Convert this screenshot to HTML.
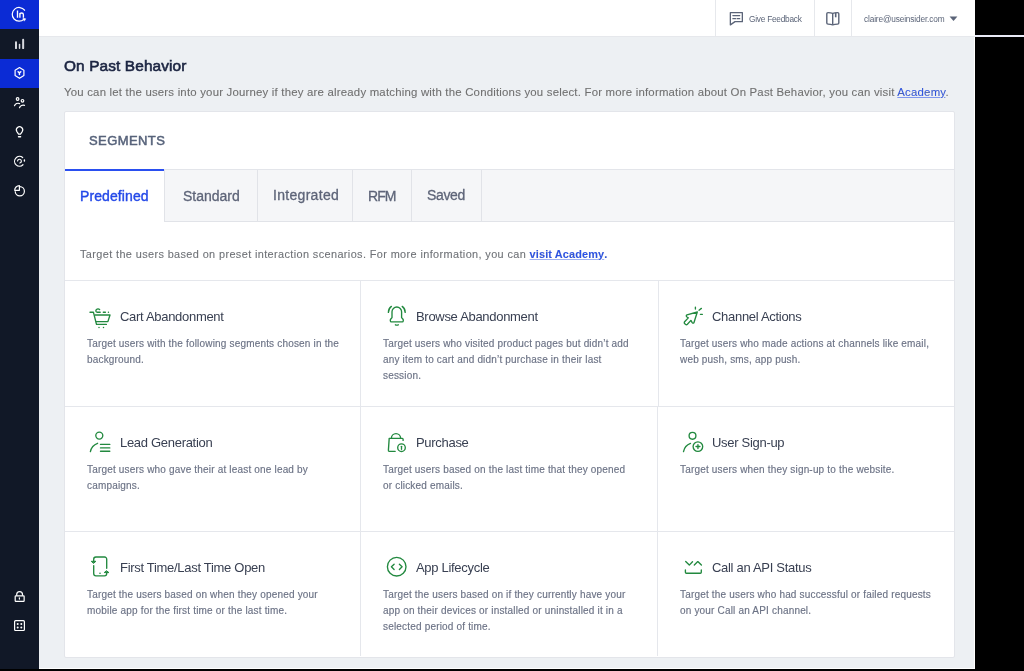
<!DOCTYPE html>
<html><head><meta charset="utf-8">
<style>
*{margin:0;padding:0;box-sizing:border-box}
html,body{width:1024px;height:671px;overflow:hidden;background:#000;font-family:"Liberation Sans",sans-serif}
.abs{position:absolute}
#page{position:absolute;left:0;top:0;width:975px;height:669px;background:#edf0f3;overflow:hidden}
#side{position:absolute;left:0;top:0;width:39px;height:669px;background:#111827}
.si{position:absolute;left:0;width:39px;height:29.4px}
#hdr{position:absolute;left:39px;top:0;width:936px;height:37px;background:#fff;border-bottom:1px solid #e6e8ec}
.vsep{position:absolute;top:0;width:1px;height:36px;background:#e6e8ec}
.t{position:absolute;white-space:nowrap;line-height:1;will-change:transform}
#card{position:absolute;left:64px;top:111px;width:891px;height:547px;background:#fff;border:1px solid #e3e5ea;border-radius:2px}
.cd{position:absolute;will-change:transform;white-space:nowrap;font-size:10px;color:#6b7285;line-height:16.2px;width:262px;letter-spacing:0.18px;-webkit-text-stroke:0.15px #6b7285}
.hl{position:absolute;height:1px;background:#e5e7ec}
.vl{position:absolute;width:1px;background:#e5e7ec}
svg{overflow:visible}
</style></head>
<body>
<div id="page">
  <div id="side">
    <div class="si" style="top:0;background:#0b2bd5"></div>
    <div class="si" style="top:58.6px;background:#0b2bd5"></div>
    
<svg class="abs" style="left:9px;top:4px" width="20" height="20" viewBox="0 0 20 20" fill="none" stroke="#fff" stroke-width="1.25" stroke-linecap="round">
 <path d="M15.57 6.23A6.85 6.85 0 1 0 15.03 15.11"/><path d="M14.3 14.5L16.7 14.8L15.5 16.8Z" fill="#fff" stroke-width="0.6"/>
 <path d="M8.5 6.5V13.7M10.9 13.7V9M10.9 10.8Q10.9 9 12.6 9Q14.4 9 14.4 10.8V13.7" stroke-width="1.35" stroke-linecap="butt"/>
</svg>
<svg class="abs" style="left:13px;top:37px" width="14" height="14" viewBox="0 0 14 14" fill="#d6d8de">
 <rect x="2" y="4.3" width="2" height="7.75" rx="0.9"/><rect x="5.8" y="6.7" width="1.5" height="5.35" rx="0.7"/><rect x="9.15" y="1.8" width="2" height="10.25" rx="0.9"/>
</svg>
<svg class="abs" style="left:13px;top:66px" width="14" height="14" viewBox="0 0 14 14" fill="none" stroke="#fff" stroke-width="1.2" stroke-linejoin="round" stroke-linecap="round">
 <path d="M6.5 1.6L10.9 4.2V9.6L6.5 12.3L2.1 9.6V4.2Z"/><path d="M5.1 5.7L6.45 6.9L7.8 5.7M6.45 6.9V8.5" stroke-width="1.5"/>
</svg>
<svg class="abs" style="left:12px;top:95px" width="16" height="16" viewBox="0 0 16 16" fill="none" stroke="#fff" stroke-width="1.2" stroke-linecap="round">
 <circle cx="5.6" cy="4" r="1.3"/><circle cx="10.5" cy="5.8" r="1.3"/><path d="M2.5 10.7A3.8 3.8 0 0 1 7.6 8.6M7.5 12.7A3.8 3.8 0 0 1 12.5 10.4"/>
</svg>
<svg class="abs" style="left:13px;top:124px" width="14" height="16" viewBox="0 0 14 16" fill="none" stroke="#fff" stroke-width="1.2" stroke-linecap="round" stroke-linejoin="round">
 <path d="M5.6 10.1L3.9 7.6A3.15 3.15 0 1 1 9.2 7.6L7.5 10.1Z"/><path d="M5.5 12.8H7.6" stroke-width="1.4"/>
</svg>
<svg class="abs" style="left:12px;top:154px" width="16" height="16" viewBox="0 0 16 16" fill="none" stroke="#fff" stroke-width="1.2" stroke-linecap="round">
 <path d="M10.65 3.55A4.9 4.9 0 1 0 10.96 10.76"/><path d="M12.4 5.9V7.1" stroke-width="1.4"/><path d="M5.6 6.8A1.9 1.9 0 1 1 7.8 9"/>
</svg>
<svg class="abs" style="left:12px;top:183px" width="16" height="16" viewBox="0 0 16 16" fill="none" stroke="#fff" stroke-width="1.2" stroke-linejoin="round">
 <path d="M7.8 3.6A4.6 4.6 0 1 1 3.2 8.2"/><path d="M7.4 7.3V2.6A4.7 4.7 0 0 0 2.7 7.3Z"/>
</svg>
<svg class="abs" style="left:13px;top:589px" width="14" height="14" viewBox="0 0 14 14" fill="none" stroke="#fff" stroke-width="1.2" stroke-linejoin="round">
 <rect x="2.2" y="6.8" width="8.95" height="5.5" rx="0.6"/><path d="M3.7 6.8V5.6A2.9 2.9 0 0 1 9.5 5.6V6.8"/><path d="M6.4 8.8V10.1" stroke-linecap="round"/>
</svg>
<svg class="abs" style="left:13px;top:619px" width="14" height="14" viewBox="0 0 14 14" fill="none" stroke="#fff" stroke-width="1.2">
 <rect x="1.6" y="1.7" width="9.8" height="9.8" rx="1"/>
 <circle cx="4.7" cy="4.9" r="1.0" fill="#fff" stroke="none"/><circle cx="8.3" cy="4.9" r="1.0" fill="#fff" stroke="none"/>
 <circle cx="4.7" cy="8.6" r="1.0" fill="#fff" stroke="none"/><circle cx="8.3" cy="8.6" r="1.0" fill="#fff" stroke="none"/>
</svg>

  </div>
  <div id="hdr">
    <div class="vsep" style="left:676px"></div>
    <div class="vsep" style="left:775px"></div>
    <div class="vsep" style="left:812px"></div>
  </div>
  <svg class="abs" style="left:728px;top:10px" width="16" height="16" viewBox="0 0 16 16" fill="none" stroke="#5b6478" stroke-width="1.3" stroke-linejoin="round" stroke-linecap="round">
    <path d="M2.35 2.55H14.35V11.65H7L2.35 14.9Z"/><path d="M4.9 5.6H11.7M4.9 8.7H7.6M9.2 8.7H11.7"/>
  </svg>
  <div class="t" style="left:748.75px;top:15.17px;font-size:8.3px;color:#5b6478;letter-spacing:-0.24px">Give Feedback</div>
  <svg class="abs" style="left:825px;top:11px" width="16" height="16" viewBox="0 0 16 16" fill="none" stroke="#5b6478" stroke-width="1.4" stroke-linejoin="round">
    <path d="M1.8 2.8Q1.8 1.6 3 1.6Q5.8 1.6 7.7 2.3Q9.6 1.6 12.6 1.6Q13.8 1.6 13.8 2.8V12.1Q13.8 13.1 12.6 13.1Q9.6 13.1 7.7 13.8Q5.8 13.1 3 13.1Q1.8 13.1 1.8 12.1Z"/><path d="M7.7 2.3V13.8"/><path d="M10.7 1.8V6.3" stroke-width="1.6"/>
  </svg>
  <div class="t" style="left:863.7px;top:15.27px;font-size:8.3px;color:#5b6478;letter-spacing:-0.15px">claire@useinsider.com</div>
  <svg class="abs" style="left:949px;top:16px" width="10" height="6" viewBox="0 0 10 6"><path d="M0.6 0.5H8.4L4.5 5Z" fill="#5b6478"/></svg>
  <div class="t" style="left:64.3px;top:58.16px;font-size:15.4px;color:#1b2441;letter-spacing:0.12px;-webkit-text-stroke:0.6px #1b2441">On Past Behavior</div>
  <div class="t" style="left:64.3px;top:86.65px;font-size:11.4px;color:#707070;letter-spacing:0.205px;-webkit-text-stroke:0.1px #707070">You can let the users into your Journey if they are already matching with the Conditions you select. For more information about On Past Behavior, you can visit <span style="color:#2a52e8;text-decoration:underline;text-decoration-color:#7f96ee">Academy</span>.</div>
  <div id="card"></div>
  <div class="t" style="left:88.6px;top:134.30px;font-size:13px;letter-spacing:0.42px;color:#56627a;-webkit-text-stroke:0.5px #56627a">SEGMENTS</div>
  <div class="hl" style="left:65px;top:169px;width:889px;background:#e3e5ea"></div>
  <div class="abs" style="left:164px;top:170px;width:790px;height:52px;background:#f5f6f8"></div>
  <div class="abs" style="left:65px;top:169px;width:99px;height:2px;background:#2a4ff0"></div>
  <div class="vl" style="left:164px;top:170px;height:52px;background:#e1e3e8"></div>
  <div class="vl" style="left:257px;top:170px;height:52px;background:#e1e3e8"></div>
  <div class="vl" style="left:352px;top:170px;height:52px;background:#e1e3e8"></div>
  <div class="vl" style="left:411px;top:170px;height:52px;background:#e1e3e8"></div>
  <div class="vl" style="left:481px;top:170px;height:52px;background:#e1e3e8"></div>
  <div class="hl" style="left:164px;top:221px;width:790px;background:#e1e3e8"></div>
  <div class="t" style="left:80.3px;top:188.95px;font-size:14px;color:#2449e8;letter-spacing:0.1px;-webkit-text-stroke:0.4px #2449e8">Predefined</div>
  <div class="t" style="left:183.2px;top:188.95px;font-size:14px;color:#5d6478;-webkit-text-stroke:0.3px #5d6478">Standard</div>
  <div class="t" style="left:272.5px;top:187.65px;font-size:14px;color:#5d6478;letter-spacing:0.3px;-webkit-text-stroke:0.3px #5d6478">Integrated</div>
  <div class="t" style="left:368.4px;top:189.15px;font-size:14px;color:#5d6478;letter-spacing:-0.9px;-webkit-text-stroke:0.3px #5d6478">RFM</div>
  <div class="t" style="left:426.8px;top:187.65px;font-size:14px;color:#5d6478;letter-spacing:-0.35px;-webkit-text-stroke:0.3px #5d6478">Saved</div>
  <div class="t" style="left:80px;top:248.97px;font-size:10.9px;color:#6f7277;letter-spacing:0.385px;-webkit-text-stroke:0.1px #6f7277">Target the users based on preset interaction scenarios. For more information, you can <span style="color:#2a52e8;font-weight:bold;letter-spacing:0.14px;text-decoration:underline;text-decoration-color:#9fb2f2">visit Academy</span><span style="color:#2a52e8;font-weight:bold">.</span></div>
  <div class="hl" style="left:65px;top:280px;width:889px"></div>
  <div class="hl" style="left:65px;top:406px;width:889px"></div>
  <div class="hl" style="left:65px;top:531px;width:889px"></div>
  <div class="vl" style="left:360px;top:280px;height:376px"></div>
  <div class="vl" style="left:658px;top:280px;height:126px"></div><div class="vl" style="left:657px;top:406px;height:250px"></div>
  <div class="abs" style="left:974px;top:37px;width:1px;height:632px;background:#fff"></div>
  <div class="abs" style="left:39px;top:668px;width:936px;height:1px;background:#fff"></div>
  <svg class="abs" style="left:84px;top:302px" width="32" height="32" viewBox="0 0 32 32" fill="none" stroke="#22893f" stroke-width="1.35" stroke-linecap="round" stroke-linejoin="round"><path d="M6 10.2H9.4L12.5 22.4H22.4"/><path d="M11 13H26L23.9 19.6H12.3"/><circle cx="15" cy="25.6" r="0.75" fill="#22893f" stroke="none"/><circle cx="19.5" cy="25.6" r="0.75" fill="#22893f" stroke="none"/><path d="M15.6 7.6C14 6.2 11.8 7.3 11.8 9C11.9 9.8 12.4 10.2 13.2 10.2H16.2M19.3 10.2H21.4M24.4 10.2H24.5"/></svg>
<div class="t" style="left:119.7px;top:310.00px;font-size:13px;color:#394052;letter-spacing:-0.3px">Cart Abandonment</div>
<div class="cd" style="left:86.9px;top:336.04px">Target users with the following segments chosen in the<br>background.</div>
<svg class="abs" style="left:380px;top:300px" width="32" height="32" viewBox="0 0 32 32" fill="none" stroke="#22893f" stroke-width="1.35" stroke-linecap="round" stroke-linejoin="round"><path d="M16.8 7A4.8 4.8 0 0 0 12 11.8V17.6L10.6 19.3C10 20 10.3 21.9 11.2 21.9H22.4C23.3 21.9 23.6 20 23 19.3L21.6 17.6V11.8A4.8 4.8 0 0 0 16.8 7Z"/><path d="M15.4 24.8Q16.8 25.5 18.3 24.8"/><path d="M8.4 12.4A7.5 7.5 0 0 1 11.4 6.4M25.2 12.4A7.5 7.5 0 0 0 22.2 6.4"/></svg>
<div class="t" style="left:416.3px;top:310.00px;font-size:13px;color:#394052;letter-spacing:-0.3px">Browse Abandonment</div>
<div class="cd" style="left:383.4px;top:336.04px">Target users who visited product pages but didn’t add<br>any item to cart and didn’t purchase in their last<br>session.</div>
<svg class="abs" style="left:676px;top:300px" width="32" height="32" viewBox="0 0 32 32" fill="none" stroke="#22893f" stroke-width="1.35" stroke-linecap="round" stroke-linejoin="round"><path d="M21.3 12L11 14.9C10.1 15.2 10 16.6 10.9 17L12.3 17.9L8.6 21.8C8.1 22.4 8.2 23.3 8.8 23.8L9.4 24.3C10 24.8 10.9 24.7 11.4 24.2L14.9 20.4L16.2 22.7C16.7 23.5 17.8 23.3 18 22.5Z"/><path d="M19.4 7.1V9.1M23 10.2L25.4 8.4M24.4 14.3H26.4"/></svg>
<div class="t" style="left:712.4px;top:310.00px;font-size:13px;color:#394052;letter-spacing:-0.3px">Channel Actions</div>
<div class="cd" style="left:679.8px;top:336.04px">Target users who made actions at channels like email,<br>web push, sms, app push.</div>
<svg class="abs" style="left:84px;top:426px" width="32" height="32" viewBox="0 0 32 32" fill="none" stroke="#22893f" stroke-width="1.35" stroke-linecap="round" stroke-linejoin="round"><circle cx="15.3" cy="9.6" r="3.5"/><path d="M6.4 25.6A11 11 0 0 1 13.6 17.3"/><path d="M16.5 18.4H25.8M16.5 21.9H25.8M16.5 25.2H25.8"/></svg>
<div class="t" style="left:119.7px;top:435.60px;font-size:13px;color:#394052;letter-spacing:-0.3px">Lead Generation</div>
<div class="cd" style="left:86.9px;top:461.83px">Target users who gave their at least one lead by<br>campaigns.</div>
<svg class="abs" style="left:380px;top:426px" width="32" height="32" viewBox="0 0 32 32" fill="none" stroke="#22893f" stroke-width="1.35" stroke-linecap="round" stroke-linejoin="round"><path d="M15.2 25.3H9.2C8.7 25.3 8.3 24.9 8.4 24.4L9.2 12.4H22.3C22.8 12.4 23.1 12.8 23.1 13.3V14.4"/><path d="M11.4 12.2A4.6 4.6 0 0 1 20.6 12.2"/><circle cx="21.5" cy="21.7" r="3.8"/><path d="M21.5 20.3V23.3"/></svg>
<div class="t" style="left:416.3px;top:435.60px;font-size:13px;color:#394052;letter-spacing:-0.3px">Purchase</div>
<div class="cd" style="left:383.4px;top:461.83px">Target users based on the last time that they opened<br>or clicked emails.</div>
<svg class="abs" style="left:676px;top:426px" width="32" height="32" viewBox="0 0 32 32" fill="none" stroke="#22893f" stroke-width="1.35" stroke-linecap="round" stroke-linejoin="round"><circle cx="16.5" cy="9.8" r="3.4"/><path d="M7.5 25.6A11 11 0 0 1 14.5 17.4"/><circle cx="21.9" cy="20.6" r="4.8"/><path d="M20 20.5H23.9M21.95 18.6V22.5"/></svg>
<div class="t" style="left:712.4px;top:435.60px;font-size:13px;color:#394052;letter-spacing:-0.3px">User Sign-up</div>
<div class="cd" style="left:679.8px;top:461.83px">Target users when they sign-up to the website.</div>
<svg class="abs" style="left:84px;top:550px" width="32" height="32" viewBox="0 0 32 32" fill="none" stroke="#22893f" stroke-width="1.35" stroke-linecap="round" stroke-linejoin="round"><path d="M22.7 18.2V9.2C22.7 7.9 21.8 7 20.5 7H11.9C10.6 7 9.7 7.9 9.7 9.2V11.2"/><path d="M9.7 15.6V23.5C9.7 24.8 10.6 25.8 11.9 25.8H20.5C21.8 25.8 22.7 24.8 22.7 23.5V22.6"/><path d="M7.6 11.3H11.9L9.75 13.2Z" fill="#22893f" stroke-width="1"/><path d="M20.6 22.6H24.9L22.75 20.9Z" fill="#22893f" stroke-width="1"/><circle cx="16" cy="23.3" r="0.8" fill="#22893f" stroke="none"/></svg>
<div class="t" style="left:119.7px;top:560.60px;font-size:13px;color:#394052;letter-spacing:-0.3px">First Time/Last Time Open</div>
<div class="cd" style="left:86.9px;top:586.94px">Target the users based on when they opened your<br>mobile app for the first time or the last time.</div>
<svg class="abs" style="left:380px;top:550px" width="32" height="32" viewBox="0 0 32 32" fill="none" stroke="#22893f" stroke-width="1.35" stroke-linecap="round" stroke-linejoin="round"><circle cx="16.7" cy="16.7" r="9.3"/><path d="M14.1 14.2L11.4 16.85L14.1 19.5M19.4 14.2L22.1 16.85L19.4 19.5"/></svg>
<div class="t" style="left:416.3px;top:560.60px;font-size:13px;color:#394052;letter-spacing:-0.3px">App Lifecycle</div>
<div class="cd" style="left:383.4px;top:586.94px">Target the users based on if they currently have your<br>app on their devices or installed or uninstalled it in a<br>selected period of time.</div>
<svg class="abs" style="left:676px;top:550px" width="32" height="32" viewBox="0 0 32 32" fill="none" stroke="#22893f" stroke-width="1.35" stroke-linecap="round" stroke-linejoin="round"><path d="M9.7 11.5L13.3 15.1L16.5 11.7M18.3 15.1L21.8 11.6L25.4 15.1"/><path d="M9.4 19.9V22.2C9.4 22.8 9.8 23.2 10.4 23.2H24.3C24.9 23.2 25.3 22.8 25.3 22.2V19.9"/></svg>
<div class="t" style="left:712.4px;top:560.60px;font-size:13px;color:#394052;letter-spacing:-0.3px">Call an API Status</div>
<div class="cd" style="left:679.8px;top:586.94px">Target the users who had successful or failed requests<br>on your Call an API channel.</div>
</div>
<div class="abs" style="left:975px;top:35.3px;width:49px;height:1.6px;background:#e8eaf6"></div>
</body></html>
